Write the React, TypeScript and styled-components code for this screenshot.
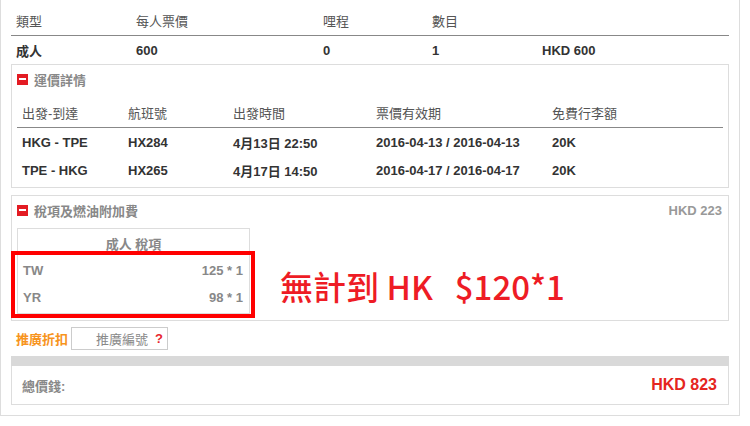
import React from 'react';
import styled, { createGlobalStyle } from 'styled-components';

const GlobalStyle = createGlobalStyle`
    body {
        margin: 0;
        background: #fff;
        font-family: "Liberation Sans", Arial, "Noto Sans CJK TC", sans-serif;
        font-size: 13px;
        color: #333;
    }
`;

const Page = styled.div`
    width: 740px;
    box-sizing: border-box;
    padding: 6px 10px 10px 10px;
    border: 1px solid #ddd;
    border-top: none;
`;

const SummaryGrid = styled.div`
    display: grid;
    grid-template-columns: 120px 187px 109px 110px 1fr;
`;

const HeadCell = styled.div`
    height: 29px;
    display: flex;
    align-items: center;
    padding-left: 5px;
    color: #555;
    border-bottom: 1px solid #888;
`;

const DataCell = styled.div`
    height: 28px;
    display: flex;
    align-items: center;
    padding-left: 5px;
    font-weight: bold;
    color: #333;
`;

const Section = styled.div<{ $gap?: number; $bottom?: number }>`
    position: relative;
    border: 1px solid #ddd;
    padding: 0 5px ${(p) => p.$bottom ?? 3}px 5px;
    margin-top: ${(p) => p.$gap ?? 0}px;
`;

const SectionTitle = styled.div`
    height: 28px;
    display: flex;
    align-items: center;
    justify-content: space-between;
    font-weight: bold;
    color: #888;
`;

const TitleLeft = styled.div`
    display: flex;
    align-items: center;
    gap: 6px;
`;

const MinusIcon = styled.span`
    width: 11px;
    height: 11px;
    background: #e31b23;
    display: inline-flex;
    align-items: center;
    justify-content: center;
    &::after {
        content: '';
        width: 7px;
        height: 2px;
        background: #fff;
    }
`;

const FlightGrid = styled.div`
    display: grid;
    grid-template-columns: 106px 105px 143px 176px 1fr;
    margin-top: 5px;
`;

const SubTotal = styled.span`
    color: #999;
    font-weight: bold;
    padding-right: 1px;
`;

const TaxBody = styled.div`
    display: flex;
    align-items: flex-start;
    margin-top: 4px;
`;

const TaxWrap = styled.div`
    position: relative;
    width: 233px;
    height: 91px;
`;

const TaxTable = styled.div`
    border: 1px solid #ddd;
    padding-bottom: 2px;
`;

const TaxHead = styled.div`
    height: 28px;
    display: flex;
    align-items: center;
    justify-content: center;
    font-weight: bold;
    color: #888;
`;

const TaxRow = styled.div`
    height: 27px;
    display: flex;
    align-items: center;
    justify-content: space-between;
    padding: 0 6px 0 5px;
    font-weight: bold;
    color: #888;
`;

const RedMark = styled.div`
    position: absolute;
    left: -6px;
    top: 23px;
    width: 244px;
    height: 67px;
    box-sizing: border-box;
    border: 4px solid #ff0000;
`;

const Note = styled.div`
    display: flex;
    gap: 22px;
    margin: 38px 0 0 30px;
    line-height: 40px;
    font-size: 33px;
    font-weight: 500;
    color: #ee1c25;
    white-space: nowrap;
    font-family: "Noto Sans CJK TC", "Noto Sans", sans-serif;
`;

const PromoRow = styled.div`
    display: flex;
    align-items: center;
    gap: 3px;
    margin-top: 6px;
    padding-left: 5px;
`;

const PromoLabel = styled.span`
    color: #f7941d;
    font-weight: bold;
`;

const PromoInput = styled.div`
    width: 97px;
    height: 23px;
    box-sizing: border-box;
    border: 1px solid #ccc;
    display: flex;
    align-items: center;
    padding-left: 24px;
    gap: 7px;
    color: #888;
`;

const Help = styled.span`
    color: #e8262d;
    font-weight: bold;
`;

const GreyBar = styled.div`
    height: 10px;
    background: #d9d9d9;
    margin-top: 6px;
`;

const TotalBox = styled.div`
    height: 38px;
    border: 1px solid #ddd;
    border-top: none;
    display: flex;
    align-items: center;
    justify-content: space-between;
    padding: 0 11px 0 10px;
`;

const TotalLabel = styled.span`
    font-weight: bold;
    color: #888;
`;

const TotalValue = styled.span`
    font-weight: bold;
    font-size: 16px;
    color: #e52520;
`;

const flights = [
    { route: 'HKG - TPE', no: 'HX284', time: '4月13日 22:50', valid: '2016-04-13 / 2016-04-13', bag: '20K' },
    { route: 'TPE - HKG', no: 'HX265', time: '4月17日 14:50', valid: '2016-04-17 / 2016-04-17', bag: '20K' },
];

const taxes = [
    { code: 'TW', amount: '125 * 1' },
    { code: 'YR', amount: '98 * 1' },
];

export default function App() {
    return (
        <>
            <GlobalStyle />
            <Page>
                <SummaryGrid>
                    {['類型', '每人票價', '哩程', '數目', ''].map((h, i) => (
                        <HeadCell key={i}>{h}</HeadCell>
                    ))}
                    {['成人', '600', '0', '1', 'HKD 600'].map((d, i) => (
                        <DataCell key={i}>{d}</DataCell>
                    ))}
                </SummaryGrid>

                <Section>
                    <SectionTitle>
                        <TitleLeft>
                            <MinusIcon />
                            運價詳情
                        </TitleLeft>
                    </SectionTitle>
                    <FlightGrid>
                        {['出發-到達', '航班號', '出發時間', '票價有效期', '免費行李額'].map((h) => (
                            <HeadCell key={h}>{h}</HeadCell>
                        ))}
                        {flights.map((f) => (
                            <React.Fragment key={f.no}>
                                <DataCell>{f.route}</DataCell>
                                <DataCell>{f.no}</DataCell>
                                <DataCell>{f.time}</DataCell>
                                <DataCell>{f.valid}</DataCell>
                                <DataCell>{f.bag}</DataCell>
                            </React.Fragment>
                        ))}
                    </FlightGrid>
                </Section>

                <Section $gap={7} $bottom={1}>
                    <SectionTitle>
                        <TitleLeft>
                            <MinusIcon />
                            稅項及燃油附加費
                        </TitleLeft>
                        <SubTotal>HKD 223</SubTotal>
                    </SectionTitle>
                    <TaxBody>
                        <TaxWrap>
                            <TaxTable>
                                <TaxHead>成人 稅項</TaxHead>
                                {taxes.map((t) => (
                                    <TaxRow key={t.code}>
                                        <span>{t.code}</span>
                                        <span>{t.amount}</span>
                                    </TaxRow>
                                ))}
                            </TaxTable>
                            <RedMark />
                        </TaxWrap>
                        <Note>
                            <span>無計到 HK</span>
                            <span>$120*1</span>
                        </Note>
                    </TaxBody>
                </Section>

                <PromoRow>
                    <PromoLabel>推廣折扣</PromoLabel>
                    <PromoInput>
                        推廣編號
                        <Help>?</Help>
                    </PromoInput>
                </PromoRow>

                <GreyBar />
                <TotalBox>
                    <TotalLabel>總價錢:</TotalLabel>
                    <TotalValue>HKD 823</TotalValue>
                </TotalBox>
            </Page>
        </>
    );
}
